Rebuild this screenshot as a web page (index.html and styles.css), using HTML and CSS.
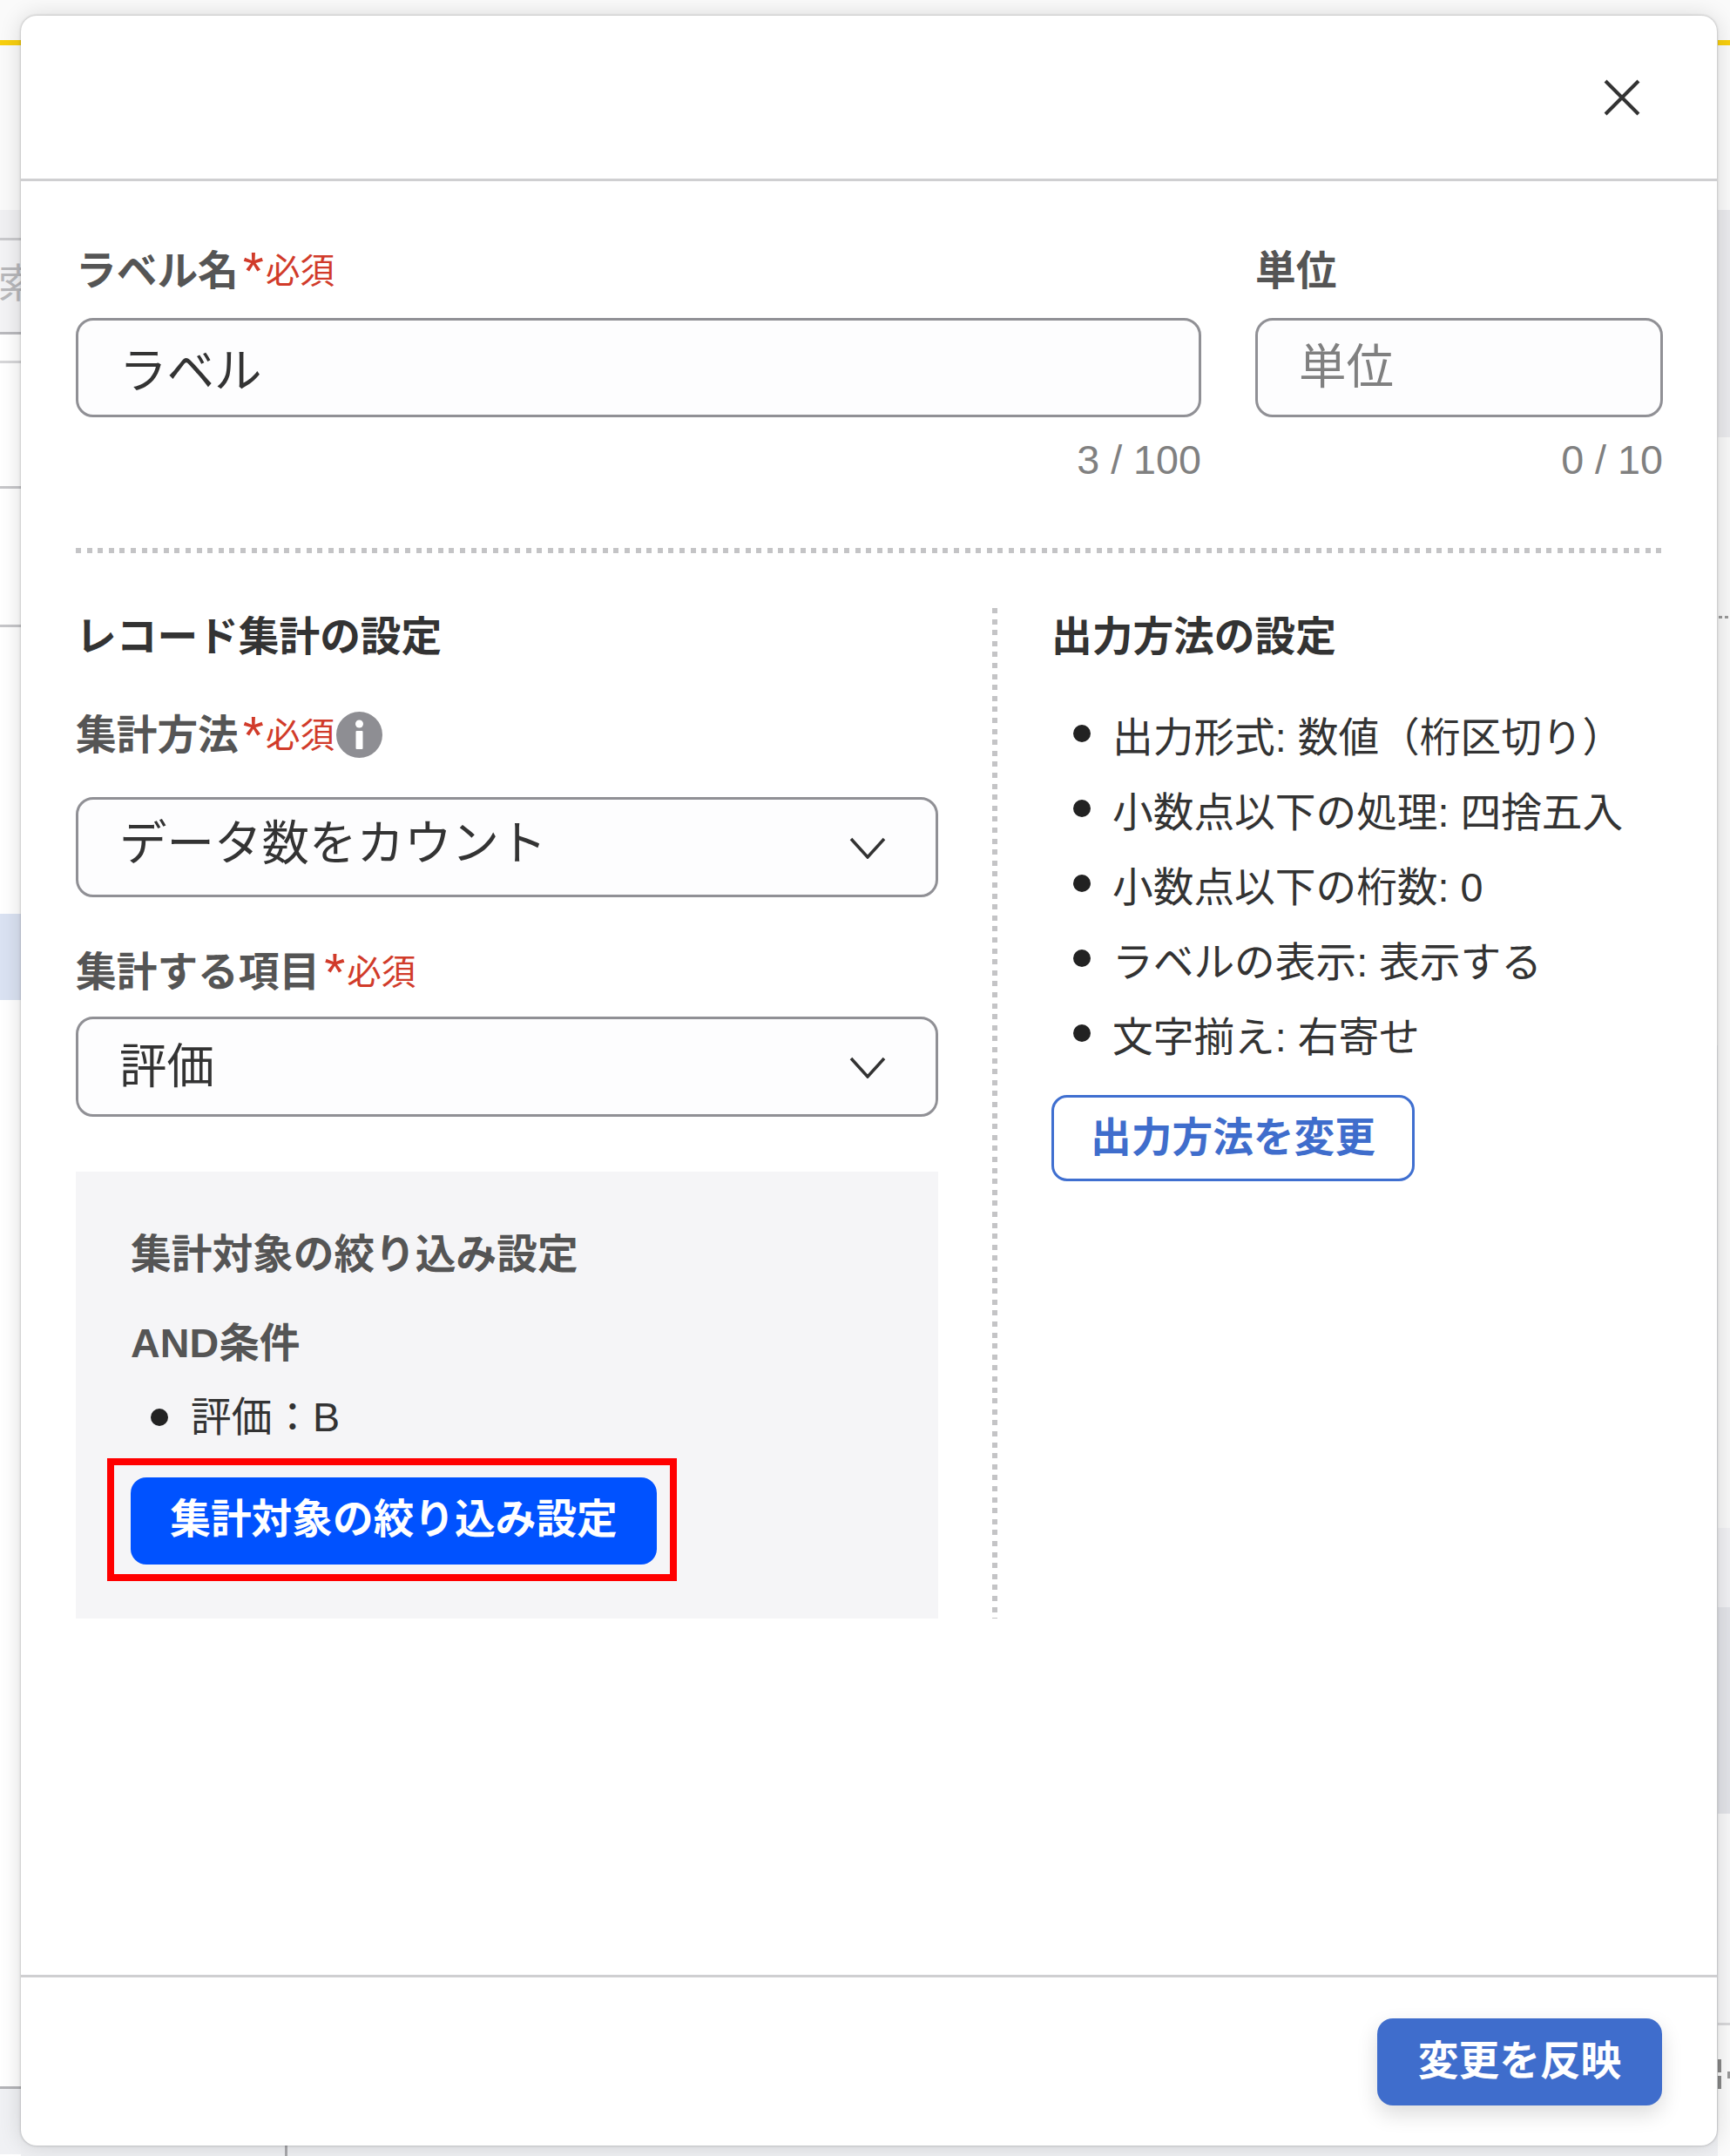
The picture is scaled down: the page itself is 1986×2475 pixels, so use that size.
FILE: index.html
```html
<!DOCTYPE html>
<html lang="ja">

<head>
  <meta charset="UTF-8">
  <meta name="viewport" content="width=device-width, initial-scale=1.0">
  <title>ラベル設定</title>
  <link rel="stylesheet" href="styles.css">
</head>

<body>
  <!-- page behind the modal, only the edges are visible -->
  <div class="under">
    <div class="under__col under__col--left">
      <div class="strip strip--top"></div>
      <div class="strip strip--yellow"></div>
      <div class="strip strip--head"></div>
      <div class="strip strip--toolbar"></div>
      <div class="strip strip--search"><span class="strip__search-text">索</span></div>
      <div class="strip strip--gap"></div>
      <div class="strip strip--row"></div>
      <div class="strip strip--row2"></div>
      <div class="strip strip--row3"></div>
      <div class="strip strip--selected"></div>
      <div class="strip strip--fill"></div>
      <div class="strip strip--foot"></div>
    </div>
    <div class="under__col under__col--right">
      <div class="strip strip--top"></div>
      <div class="strip strip--yellow"></div>
      <div class="strip strip--head"></div>
      <div class="strip strip--band"></div>
      <div class="strip strip--dots"><span class="strip__dots-text"></span></div>
      <div class="strip strip--band2"></div>
      <div class="strip strip--band3"></div>
      <div class="strip strip--band4"></div>
      <div class="strip strip--end"><span class="strip__mark"></span></div>
    </div>
    <div class="under__divider"></div>
  </div>

  <div class="modal">
    <div class="modal__head">
      <button class="btn-close">
        <svg class="btn-close__icon" viewBox="0 0 41 41">
          <path d="M2 2 L39 39 M39 2 L2 39" />
        </svg>
      </button>
    </div>

    <div class="modal__body">
      <div class="names">
        <div class="field field--name">
          <label class="field__label">ラベル名<span class="mark">*</span><span class="required">必須</span></label>
          <input class="text-input" type="text" value="ラベル">
          <div class="counter">3 / 100</div>
        </div>
        <div class="field field--unit">
          <label class="field__label">単位</label>
          <input class="text-input text-input--unit" type="text" placeholder="単位">
          <div class="counter">0 / 10</div>
        </div>
      </div>

      <div class="divider"></div>

      <div class="settings">
        <div class="settings__left">
          <h2 class="section-title">レコード集計の設定</h2>

          <label class="field__label field__label--method">集計方法<span class="mark">*</span><span class="required">必須</span>
            <svg class="info" viewBox="0 0 53 53">
              <circle cx="26.5" cy="26.5" r="26.5" />
              <circle class="info__dot" cx="26.5" cy="14" r="4.5" />
              <rect class="info__dot" x="22.5" y="22" width="8" height="21" rx="1" />
            </svg>
          </label>
          <div class="select">
            <span class="select__text">データ数をカウント</span>
            <svg class="select__arrow" viewBox="0 0 42 25">
              <path d="M2 2 L21 23 L40 2" />
            </svg>
          </div>

          <label class="field__label field__label--item">集計する項目<span class="mark">*</span><span class="required">必須</span></label>
          <div class="select select--item">
            <span class="select__text">評価</span>
            <svg class="select__arrow" viewBox="0 0 42 25">
              <path d="M2 2 L21 23 L40 2" />
            </svg>
          </div>

          <div class="filter">
            <div class="filter__title">集計対象の絞り込み設定</div>
            <div class="filter__cond">AND条件</div>
            <ul class="filter__list">
              <li class="filter__item">評価：B</li>
            </ul>
            <div class="filter__action">
              <button class="btn btn--primary">集計対象の絞り込み設定</button>
              <span class="annotation"></span>
            </div>
          </div>
        </div>

        <div class="settings__right">
          <h2 class="section-title">出力方法の設定</h2>
          <ul class="output">
            <li class="output__item">出力形式: 数値（桁区切り）</li>
            <li class="output__item">小数点以下の処理: 四捨五入</li>
            <li class="output__item">小数点以下の桁数: 0</li>
            <li class="output__item">ラベルの表示: 表示する</li>
            <li class="output__item">文字揃え: 右寄せ</li>
          </ul>
          <button class="btn btn--outline">出力方法を変更</button>
        </div>
      </div>
    </div>

    <div class="modal__foot">
      <button class="btn btn--apply">変更を反映</button>
    </div>
  </div>
</body>

</html>
```

FILE: styles.css
```css
* {
  box-sizing: border-box;
}

body {
  margin: 0;
  height: 2475px;
  position: relative;
  overflow: hidden;
  background: #fff;
  color: #333;
  font-family: "Liberation Sans", "Noto Sans CJK JP", sans-serif;
  font-size: 46.7px;
}

ul {
  margin: 0;
  padding: 0;
  list-style: none;
}

button {
  font-family: inherit;
  cursor: pointer;
}

/* page behind the modal */
.under {
  position: absolute;
  inset: 0;
  display: flex;
  justify-content: space-between;
  background: linear-gradient(#fafafa 1200px, #eff0f3 1200px);
}

.under__col {
  display: flex;
  flex-direction: column;
  background: #fff;
}

.under__col--left {
  width: 24px;
}

.under__col--right {
  width: 14px;
}

.under__divider {
  position: absolute;
  left: 327px;
  top: 2455px;
  width: 3px;
  height: 20px;
  background: #a9a9ad;
}

.strip {
  flex: none;
}

.strip--top {
  height: 46px;
  background: #fafafa;
}

.strip--yellow {
  height: 6px;
  background: #f8cf0e;
}

.strip--head {
  height: 189px;
  background: #fafafa;
}

.strip--toolbar {
  height: 32px;
  background: #f0f0f2;
}

.strip--search {
  height: 111px;
  display: flex;
  justify-content: flex-end;
  align-items: center;
  padding-bottom: 16px;
  background: #f3f3f5;
  border-top: 3px solid #c9c9cc;
  border-bottom: 3px solid #b9b9bd;
}

.strip__search-text {
  flex: none;
  margin-right: -20px;
  font-size: 46px;
  color: #b8b8bb;
}

.strip--gap {
  height: 33px;
  border-bottom: 3px solid #d6d6d8;
}

.strip--row {
  height: 144px;
  border-bottom: 3px solid #c6c6c9;
}

.strip--row2 {
  height: 159px;
  border-bottom: 3px solid #c6c6c9;
}

.strip--row3 {
  height: 329px;
}

.strip--selected {
  height: 99px;
  background: #dae2f2;
}

.strip--fill {
  height: 1250px;
  border-bottom: 3px solid #b4b4b8;
}

.strip--foot {
  height: 75px;
  background: #f0f1f4;
}

.strip--band {
  height: 261px;
  background: #eaeaed;
}

.strip--dots {
  height: 1252px;
  background: #f8f8f8;
}

.strip__dots-text {
  display: block;
  width: 12px;
  height: 3px;
  margin: 205px 0 0 1px;
  background: repeating-linear-gradient(90deg, #999 0 4px, transparent 4px 7px);
}

.strip--band2 {
  height: 91px;
  background: #f0f0f3;
}

.strip--band3 {
  height: 237px;
  background: #e2e3e8;
}

.strip--band4 {
  height: 243px;
  background: #f7f7f8;
  border-bottom: 3px solid #d8d8da;
}

.strip--end {
  height: 150px;
  background: #fbfbfb;
}

.strip__mark {
  display: block;
  width: 14px;
  height: 35px;
  margin-top: 39px;
  background:
    repeating-linear-gradient(#888 0 15px, transparent 15px 19px) 0 0 / 4px 100% no-repeat,
    linear-gradient(#999, #999) 11px 14px / 3px 8px no-repeat;
}

/* modal */
.modal {
  position: relative;
  display: flex;
  flex-direction: column;
  height: 2445px;
  margin: 18px 15px 12px 24px;
  border-radius: 18px;
  background: #fff;
  box-shadow: 0 0 3px rgba(0, 0, 0, .3), 0 0 26px rgba(0, 0, 0, .14);
}

.modal__head {
  display: flex;
  justify-content: flex-end;
  align-items: center;
  flex: none;
  height: 190px;
  padding-right: 88px;
  border-bottom: 3px solid #cfcfd1;
}

.btn-close {
  display: flex;
  padding: 0;
  border: 0;
  background: none;
}

.btn-close__icon {
  width: 42px;
  height: 42px;
  fill: none;
  stroke: #333;
  stroke-width: 4;
}

.modal__body {
  flex: 1;
  padding: 71px 62px 0 63px;
}

.modal__foot {
  display: flex;
  justify-content: flex-end;
  flex: none;
  height: 196px;
  padding: 47px 63px 0 0;
  border-top: 3px solid #cfcfd1;
}

/* fields */
.names {
  display: flex;
  gap: 62px;
}

.field--name {
  flex: 1;
}

.field--unit {
  width: 468px;
}

.field__label {
  display: flex;
  align-items: center;
  height: 60px;
  margin-bottom: 26px;
  padding-top: 3px;
  font-weight: 700;
  line-height: 60px;
  color: #555;
}

.field__label--method {
  margin: 54px 0 43px;
}

.field__label--item {
  margin: 54px 0 23px;
}

.mark {
  margin: 0 2px 0 5px;
  font-size: 62px;
  font-weight: 400;
  line-height: 0;
  color: #d13b2a;
}

.required {
  font-size: 39.5px;
  font-weight: 400;
  color: #d13b2a;
}

.info {
  width: 53px;
  height: 53px;
  margin-left: 2px;
  fill: #8e8e93;
}

.info__dot {
  fill: #fff;
}

.text-input {
  display: block;
  width: 100%;
  height: 114px;
  padding: 0 20px 2px 47px;
  border: 3px solid #909095;
  border-radius: 20px;
  outline: none;
  background: #fdfdfe;
  font-family: inherit;
  font-size: 54.5px;
  color: #333;
}

.text-input--unit {
  padding-bottom: 2px;
}

.text-input::placeholder {
  color: #808080;
  opacity: 1;
}

.counter {
  height: 52px;
  margin-top: 23px;
  font-size: 46.7px;
  line-height: 52px;
  text-align: right;
  color: #808080;
}

.divider {
  height: 6px;
  margin-top: 75px;
  background: repeating-linear-gradient(90deg, #c4c4c6 0 6px, transparent 6px 12.6px);
}

/* two columns */
.settings {
  display: flex;
  margin-top: 63px;
}

.settings__left {
  flex: none;
  width: 990px;
}

.settings__right {
  flex: 1;
  margin-left: 62px;
  padding-left: 68px;
  background: repeating-linear-gradient(180deg, #c4c4c6 0 6px, transparent 6px 12.6px) left top / 6px 100% no-repeat;
}

.section-title {
  height: 60px;
  margin: 0;
  font-size: 46.7px;
  font-weight: 700;
  line-height: 66px;
  color: #333;
}

.select {
  display: flex;
  justify-content: space-between;
  align-items: center;
  height: 115px;
  padding: 0 57px 0 47px;
  border: 3px solid #909095;
  border-radius: 20px;
  background: #fdfdfe;
}

.select__text {
  margin-bottom: 8px;
  font-size: 54.5px;
  line-height: 60px;
}

.select--item .select__text {
  margin-bottom: 0;
}

.select__arrow {
  width: 42px;
  height: 25px;
  margin-top: 2px;
  fill: none;
  stroke: #333;
  stroke-width: 3.5;
}

/* filter box */
.filter {
  margin-top: 63px;
  padding: 65px 63px 62px;
  background: #f5f5f7;
}

.filter__title,
.filter__cond {
  font-weight: 700;
  line-height: 60px;
  color: #555;
}

.filter__cond {
  margin-top: 42px;
}

.filter__list {
  margin-top: 25px;
}

.filter__item {
  display: flex;
  align-items: center;
  gap: 26px;
  padding-left: 23px;
  line-height: 60px;
}

.filter__item::before {
  content: "";
  width: 20px;
  height: 20px;
  border-radius: 50%;
  background: #222;
}

.filter__action {
  position: relative;
  width: 604px;
  margin-top: 39px;
}

/* red annotation frame drawn over the screenshot */
.annotation {
  position: absolute;
  inset: -22px -23px -19px -27px;
  border: 8px solid #f00;
}

.btn {
  border: 0;
  font-size: 46.7px;
  font-weight: 700;
  white-space: nowrap;
}

.btn--primary {
  display: block;
  width: 604px;
  height: 100px;
  padding: 0 0 14px;
  border-radius: 18px;
  background: #0052ff;
  color: #fff;
}

.btn--outline {
  width: 417px;
  height: 99px;
  padding: 0 0 10px;
  border: 3px solid #3f6fd0;
  border-radius: 18px;
  background: #fff;
  color: #3f6dcc;
}

.btn--apply {
  width: 327px;
  height: 100px;
  padding: 0 0 12px;
  border-radius: 18px;
  background: #3f6dcc;
  color: #fff;
  box-shadow: 0 10px 24px rgba(0, 0, 0, .14);
}

/* output list */
.output {
  margin: 41px 0 28px;
}

.output__item {
  display: flex;
  align-items: center;
  gap: 25px;
  height: 86px;
  padding-left: 25px;
  white-space: nowrap;
}

.output__item::before {
  content: "";
  flex: none;
  width: 20px;
  height: 20px;
  border-radius: 50%;
  background: #222;
}
```
